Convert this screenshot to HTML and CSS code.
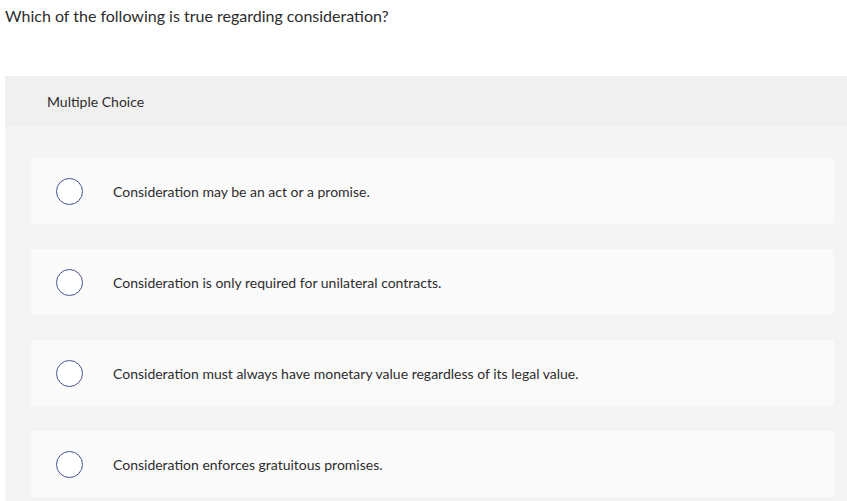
FILE: index.html
```
<!DOCTYPE html>
<html>
<head>
<meta charset="utf-8">
<link rel="stylesheet" href="styles.css">
</head>
<body>
<div class="page">
  <p class="question">Which of the following is true regarding consideration?</p>
  <div class="panel">
    <div class="panel-head">Multiple Choice</div>
    <div class="panel-body">
      <div class="option"><span class="radio"></span><span class="label">Consideration may be an act or a promise.</span></div>
      <div class="option"><span class="radio"></span><span class="label">Consideration is only required for unilateral contracts.</span></div>
      <div class="option"><span class="radio"></span><span class="label">Consideration must always have monetary value regardless of its legal value.</span></div>
      <div class="option"><span class="radio"></span><span class="label">Consideration enforces gratuitous promises.</span></div>
    </div>
  </div>
</div>
</body>
</html>
```
FILE: styles.css
```
html, body {
  margin: 0;
  padding: 0;
  background: #ffffff;
  overflow: hidden;
}
.page {
  padding-left: 5px;
  font-family: Lato, "Liberation Sans", sans-serif;
  color: #333333;
}
.question {
  margin: 0;
  padding-top: 6px;
  height: 70px;
  font-size: 16px;
  line-height: 20px;
  color: #2d2d2d;
}
.panel {
  background: #f4f4f4;
}
.panel-head {
  background: #f0f0f0;
  height: 50px;
  padding-left: 42px;
  display: flex;
  align-items: center;
  font-size: 14px;
  color: #2d2d2d;
}
.panel-body {
  padding: 32px 13px 4px 26px;
  display: flex;
  flex-direction: column;
  gap: 25px;
}
.option {
  height: 66px;
  background: #fafafa;
  border-radius: 3px;
  display: flex;
  align-items: center;
  padding-left: 25px;
}
.radio {
  width: 25px;
  height: 25px;
  border: 1.5px solid #46528a;
  border-radius: 50%;
  background: #ffffff;
  flex: none;
}
.label {
  margin-left: 30px;
  font-size: 14px;
  color: #2d2d2d;
}
```
